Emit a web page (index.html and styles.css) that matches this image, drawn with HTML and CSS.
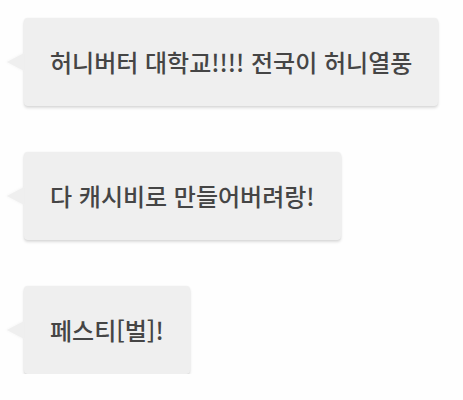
FILE: index.html
```html
<!DOCTYPE html>
<html lang="ko">
<head>
<meta charset="utf-8">
<link rel="stylesheet" href="styles.css">
</head>
<body>
<div class="chat">
  <div class="bubble">허니버터 대학교!!!! 전국이 허니열풍</div>
  <div class="bubble">다 캐시비로 만들어버려랑!</div>
  <div class="bubble">페스티[벌]!</div>
</div>
</body>
</html>
```
FILE: styles.css
```css
html, body {
  margin: 0;
  background: #fefefe;
}
.chat {
  display: flex;
  flex-direction: column;
  align-items: flex-start;
  gap: 46px;
  padding: 18px 0 0 24px;
}
.bubble {
  position: relative;
  box-sizing: border-box;
  height: 88px;
  display: flex;
  align-items: center;
  padding: 0 26px 2px 26px;
  background: #efefef;
  border-radius: 4px;
  box-shadow: 0 2px 3px rgba(0,0,0,0.14), 0 0 2px rgba(0,0,0,0.05);
  font-family: "Noto Sans CJK KR", "Noto Sans", sans-serif;
  font-size: 24px;
  font-weight: 500;
  color: #454545;
  white-space: nowrap;
}
.bubble::before {
  content: "";
  position: absolute;
  left: -17px;
  top: 50%;
  margin-top: -9px;
  border-style: solid;
  border-width: 9px 17px 9px 0;
  border-color: transparent #efefef transparent transparent;
  filter: drop-shadow(-1px 0 1px rgba(0,0,0,0.04));
}
```
